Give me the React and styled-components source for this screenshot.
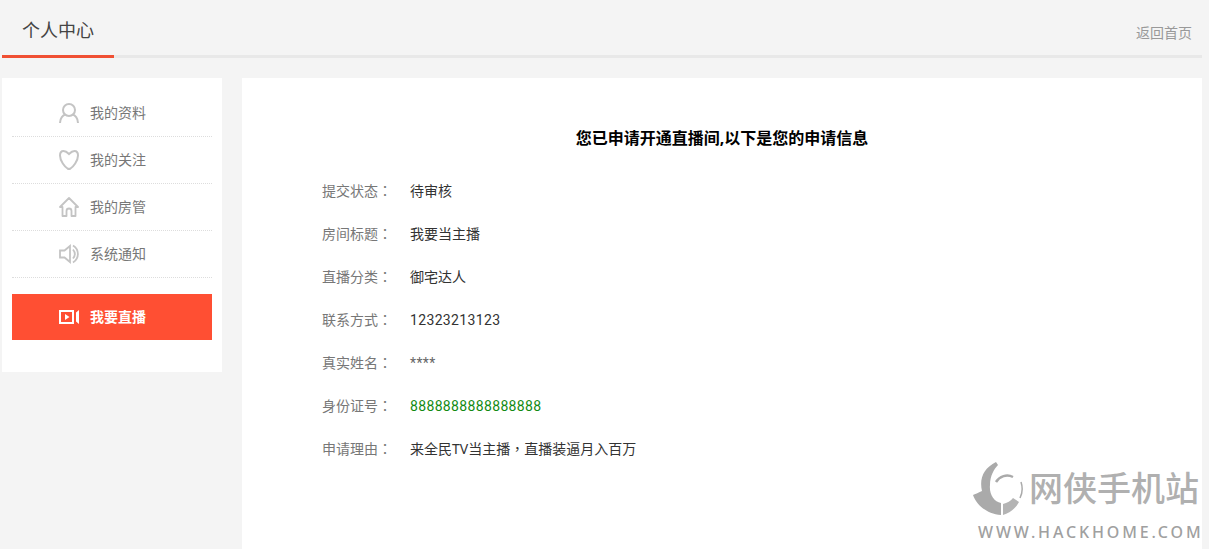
import styled, { createGlobalStyle } from "styled-components";

const GlobalStyle = createGlobalStyle`
    html, body {
        margin: 0;
        padding: 0;
        background: #f4f4f4;
        font-family: "Noto Sans", "Noto Sans CJK SC", sans-serif;
    }
`

const Punct = styled.span`
    font-family: "Noto Sans CJK TC", sans-serif;
`

const menu = [
    { name: "我的资料", icon: "user" },
    { name: "我的关注", icon: "heart" },
    { name: "我的房管", icon: "home" },
    { name: "系统通知", icon: "sound" },
]

const info = [
    { label: "提交状态", value: "待审核" },
    { label: "房间标题", value: "我要当主播" },
    { label: "直播分类", value: "御宅达人" },
    { label: "联系方式", value: "12323213123", num: true },
    { label: "真实姓名", value: "****", num: true, muted: true },
    { label: "身份证号", value: "8888888888888888", num: true, green: true },
    { label: "申请理由", value: <>来全民TV当主播<Punct>，</Punct>直播装逼月入百万</> },
]

function MenuIcon({ name }) {
    if (name == "user") {
        return (
            <svg width="20" height="20" viewBox="0 0 20 20" fill="none" stroke="#c4c4c4" strokeWidth="2">
                <circle cx="10" cy="7" r="6" />
                <path d="M1 20c0-5 3-8 5.500-8.500M19 20c0-5-3-8-5.500-8.500" />
            </svg>
        )
    }
    if (name == "heart") {
        return (
            <svg width="20" height="20" viewBox="0 0 20 20" fill="none" stroke="#c4c4c4" strokeWidth="2">
                <path d="M10 4C8 2 6 1 4.500 1 2.500 1 1 2.800 1 5.500 1 11 6 17 8.500 18.500q1.500.8 3 0C14 17 19 11 19 5.500 19 2.800 17.500 1 15.500 1 14 1 12 2 10 4z" />
            </svg>
        )
    }
    if (name == "home") {
        return (
            <svg width="20" height="20" viewBox="0 0 20 20" fill="none" stroke="#c4c4c4" strokeWidth="1.800" strokeLinejoin="round">
                <path d="M10 1l9 9h-2.500v9h-4v-5a2.500 2.500 0 0 0-5 0v5h-4v-9H1z" />
            </svg>
        )
    }
    if (name == "sound") {
        return (
            <svg width="20" height="20" viewBox="0 0 20 20" fill="none" stroke="#c4c4c4" strokeWidth="1.800">
                <path d="M1 6.500h4.500L11 2v16l-5.500-4.500H1z" />
                <path d="M14 5.500c2.300 2.800 2.300 6.200 0 9" />
                <path d="M14 1.500c6.500 4 6.500 13 0 17" />
            </svg>
        )
    }
    return null
}

export default function App() {
    return (
        <>
            <GlobalStyle />
            <Page>
                <Header>
                    <Tab>个人中心</Tab>
                    <BackLink>返回首页</BackLink>
                </Header>
                <Content>
                    <Sidebar>
                        {menu.map((item) => (
                            <MenuRow key={item.name}>
                                <MenuIcon name={item.icon} />
                                <span>{item.name}</span>
                            </MenuRow>
                        ))}
                        <LiveButton>
                            <svg width="20" height="14" viewBox="0 0 20 14">
                                <path fill="#fff" fillRule="evenodd" d="M0 0h15v14H0zM2 2v10h11V2z" />
                                <path fill="#fff" d="M6 4l4.500 3L6 10z" />
                                <path fill="#fff" d="M20 0v14l-3-2.500v-9z" />
                            </svg>
                            <span>我要直播</span>
                        </LiveButton>
                    </Sidebar>
                    <Panel>
                        <Title>您已申请开通直播间,以下是您的申请信息</Title>
                        <InfoList>
                            {info.map((row) => (
                                <InfoRow key={row.label}>
                                    <Label>{row.label}<Punct>：</Punct></Label>
                                    <Value $num={row.num} $green={row.green} $muted={row.muted}>{row.value}</Value>
                                </InfoRow>
                            ))}
                        </InfoList>
                    </Panel>
                </Content>
                <Watermark>
                    <LogoLine>
                        <svg width="54" height="60" viewBox="0 0 54 60">
                            <path fill="#aaa" d="M26 4C14 10 9 20 12 33 8 35 5 36 3 37c3 9 13 19 28 20V45c-7-1-12-9-11-18 0-9 4-16 8-20z" />
                            <path fill="#b4b4b4" d="M33 57c7-2 13-7 16-13l-6-4c-2 3-6 5-10 6z" />
                            <path fill="none" stroke="#aaa" strokeWidth="2.500" d="M43 19A13 13 0 0 0 26 24" />
                            <path fill="none" stroke="#aaa" strokeWidth="1.500" d="M51 24c2 6 1 12-1 16" />
                        </svg>
                        <LogoText>网侠手机站</LogoText>
                    </LogoLine>
                    <LogoUrl>WWW.HACKHOME.COM</LogoUrl>
                </Watermark>
            </Page>
        </>
    )
}

const Page = styled.div`
    position: relative;
    width: 1209px;
    height: 549px;
    overflow: hidden;
    box-sizing: border-box;
    padding: 0 7px 0 2px;
`

const Header = styled.header`
    height: 58px;
    box-sizing: border-box;
    border-bottom: 3px solid #e8e8e8;
    display: flex;
    justify-content: space-between;
`

const Tab = styled.div`
    width: 112px;
    height: 58px;
    box-sizing: border-box;
    border-bottom: 3px solid #f05033;
    padding: 17px 0 0 20px;
    font-size: 18px;
    line-height: 26px;
    color: #444;
`

const BackLink = styled.a`
    padding: 23px 10px 0 0;
    font-size: 14px;
    line-height: 20px;
    color: #999;
`

const Content = styled.div`
    display: flex;
    align-items: flex-start;
    gap: 20px;
    margin-top: 20px;
`

const Sidebar = styled.aside`
    width: 220px;
    height: 294px;
    box-sizing: border-box;
    padding: 12px 10px 0;
    background: #fff;
`

const MenuRow = styled.div`
    height: 47px;
    box-sizing: border-box;
    border-bottom: 1px dotted #ddd;
    display: flex;
    align-items: center;
    gap: 11px;
    padding-left: 47px;
    font-size: 14px;
    color: #777;
    span {
        padding-bottom: 2px;
    }
`

const LiveButton = styled.div`
    height: 46px;
    margin-top: 16px;
    background: #ff4f33;
    display: flex;
    align-items: center;
    gap: 11px;
    padding-left: 47px;
    font-size: 14px;
    font-weight: 700;
    color: #fff;
    span {
        padding-bottom: 2px;
    }
`

const Panel = styled.main`
    flex: 1;
    height: 471px;
    background: #fff;
`

const Title = styled.h2`
    margin: 0;
    padding-top: 48px;
    font-size: 16px;
    line-height: 24px;
    font-weight: 700;
    text-align: center;
    color: #000;
`

const InfoList = styled.div`
    display: flex;
    flex-direction: column;
    padding: 18px 0 0 80px;
`

const InfoRow = styled.div`
    height: 43px;
    display: flex;
    align-items: center;
    font-size: 14px;
`

const Label = styled.span`
    width: 88px;
    color: #777;
`

const Value = styled.span`
    padding-top: ${(props) => (props.$num ? "2px" : "0")};
    font-family: ${(props) => (props.$num ? "Roboto, sans-serif" : "inherit")};
    letter-spacing: ${(props) => (props.$num ? "0.35px" : "0")};
    color: ${(props) => (props.$green ? "#128a12" : props.$muted ? "#666" : "#333")};
`

const Watermark = styled.div`
    position: absolute;
    left: 970px;
    top: 458px;
    width: 236px;
`

const LogoLine = styled.div`
    display: flex;
    align-items: center;
    gap: 5px;
`

const LogoText = styled.span`
    font-size: 34px;
    line-height: 60px;
    font-weight: 500;
    color: #b0b0b0;
    white-space: nowrap;
`

const LogoUrl = styled.div`
    margin-top: 4px;
    padding-left: 8px;
    font-size: 16px;
    line-height: 20px;
    font-weight: 500;
    letter-spacing: 2.850px;
    color: #a0a0a0;
    white-space: nowrap;
`
